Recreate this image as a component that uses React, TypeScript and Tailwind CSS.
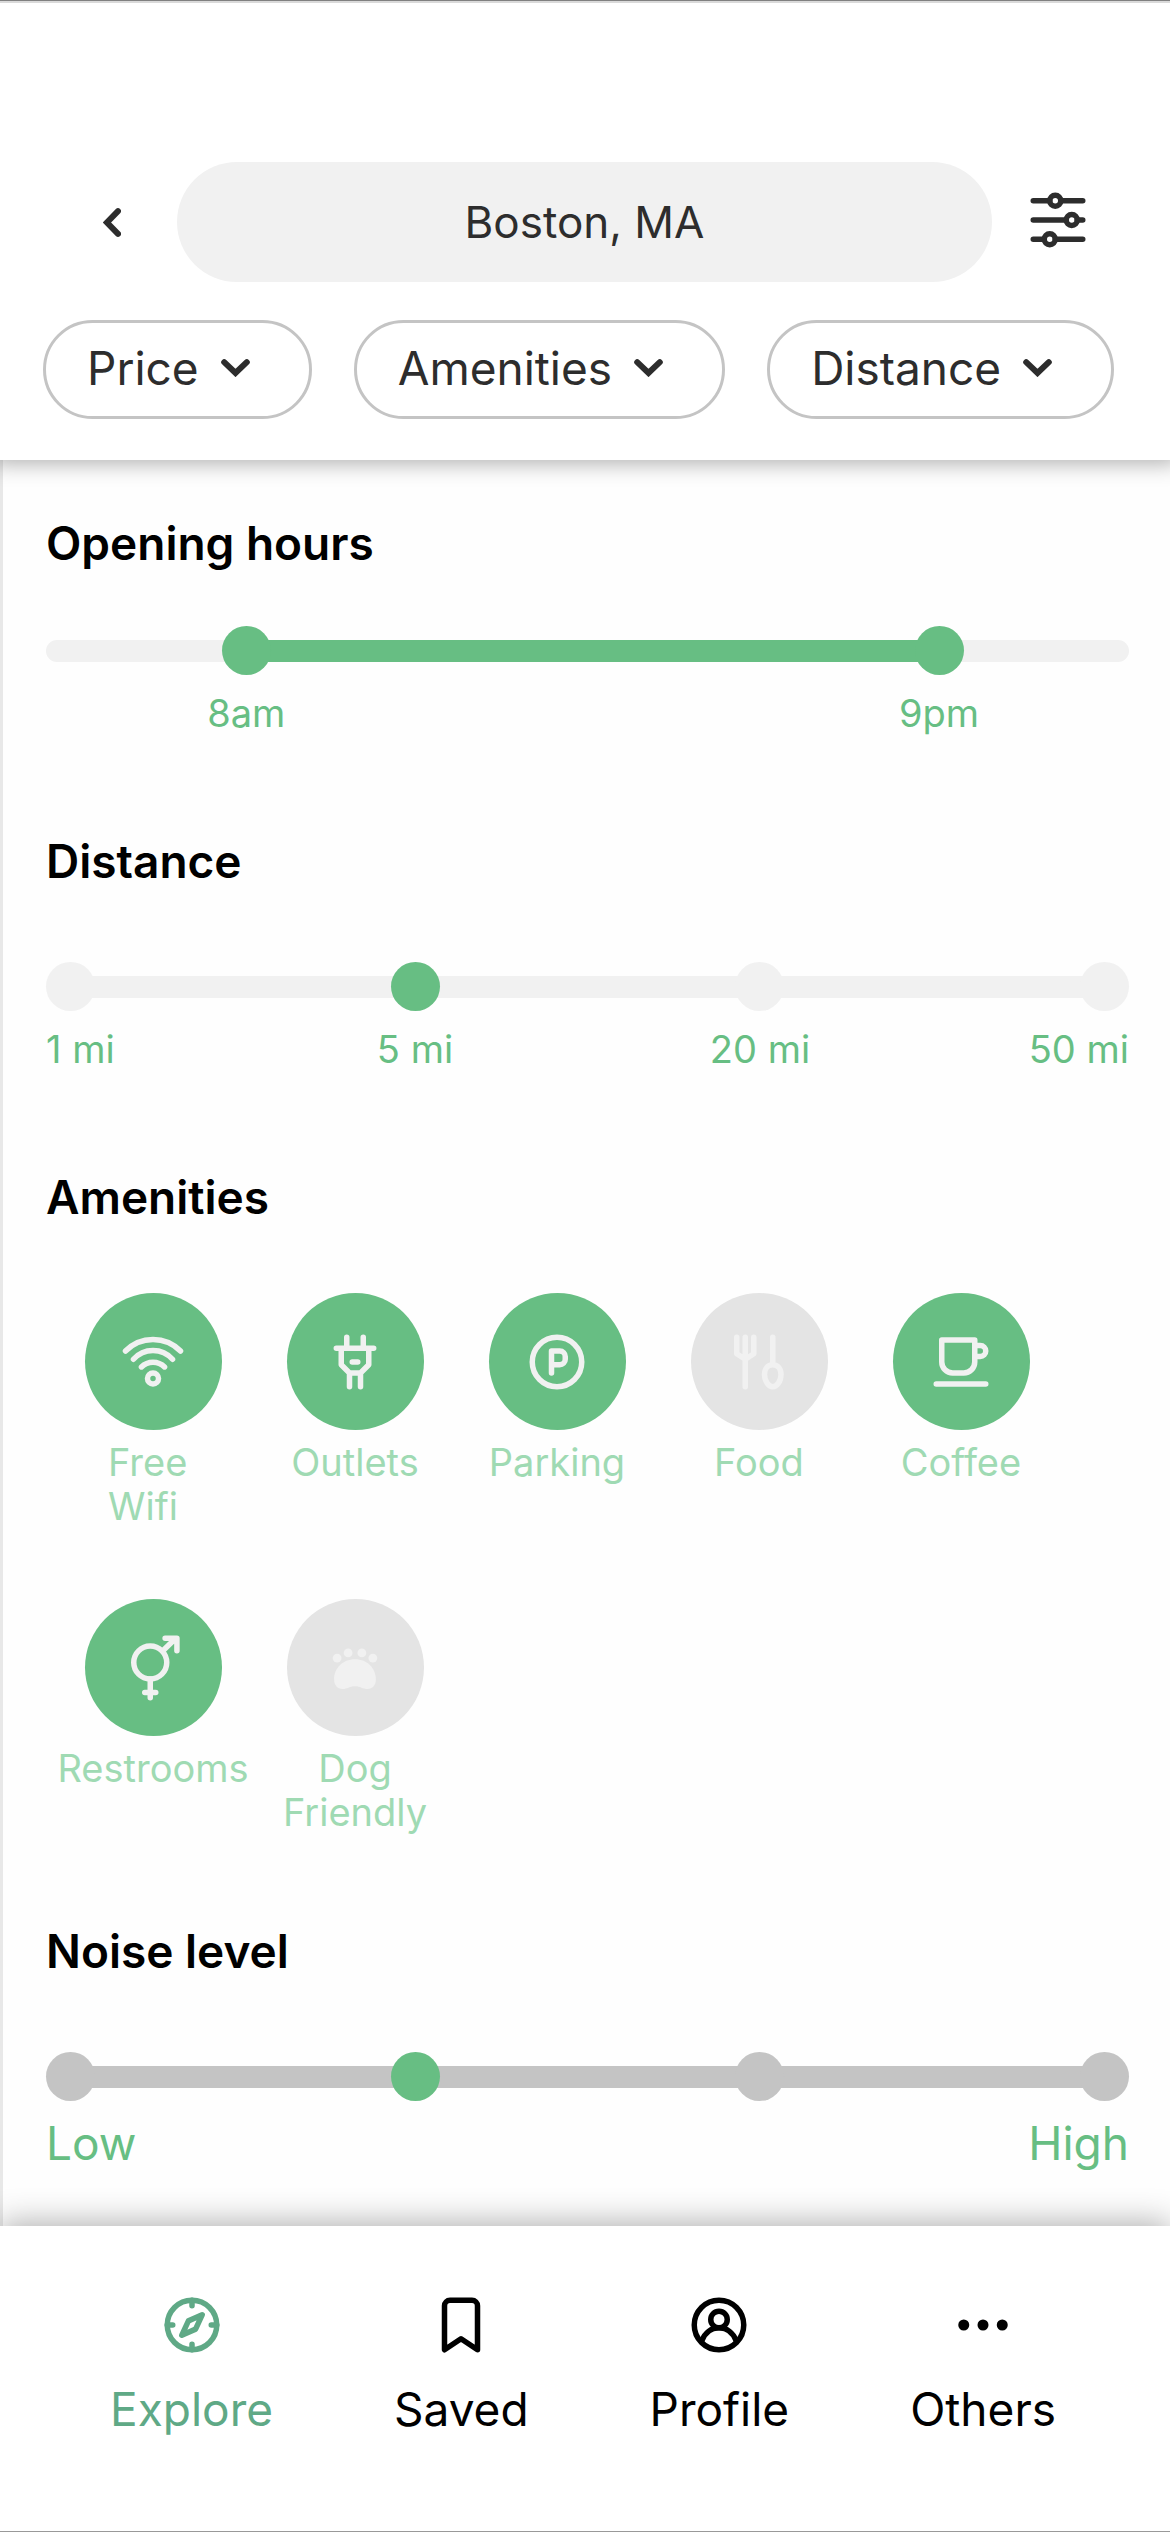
import React, { useState } from "react";

function Icon({ children }: { children: React.ReactNode }) {
  return (
    <svg
      viewBox="0 0 24 24"
      className="size-[66px] shrink-0"
      fill="none"
      stroke="currentColor"
      strokeWidth="2"
      strokeLinecap="round"
      strokeLinejoin="round"
      aria-hidden="true"
    >
      {children}
    </svg>
  );
}

function ChevronDown() {
  return (
    <svg viewBox="0 0 29 18" className="h-[18px] w-[29px] shrink-0" fill="none" stroke="currentColor" strokeWidth="6" strokeLinecap="round" aria-hidden="true">
      <path d="M3.2 3.2L14.5 14L25.8 3.2" />
    </svg>
  );
}

const filters = ["Price", "Amenities", "Distance"];

function Header() {
  return (
    <header className="relative z-10 border-t border-[#808080] bg-white pt-[161px] pb-[41px] text-[#2d2d2d] shadow-[0_-4px_20px_8px_rgba(0,0,0,0.3),inset_0_2px_0_#dadada]">
      <div className="flex items-center pr-[79px] pl-[83px]">
        <button type="button" aria-label="Back" className="flex h-[66px] w-[58px] shrink-0 items-center justify-center">
          <svg viewBox="0 0 18 29" className="h-[29px] w-[18px]" fill="none" stroke="currentColor" strokeWidth="6" strokeLinecap="round" aria-hidden="true">
            <path d="M15 3.2L4 14.5L15 25.8" />
          </svg>
        </button>
        <input
          aria-label="Location"
          defaultValue="Boston, MA"
          className="ml-9 h-[120px] min-w-0 flex-1 rounded-full bg-[#f1f1f1] text-center text-[44px] outline-none"
        />
        <button type="button" aria-label="Filters" className="-mt-1 ml-[33px] shrink-0">
          <Icon>
            <path d="M3 5h6M13 5h8M3 12h12M19 12h2M3 19h4M11 19h10" />
            <circle cx="11" cy="5" r="2" />
            <circle cx="17" cy="12" r="2" />
            <circle cx="9" cy="19" r="2" />
          </Icon>
        </button>
      </div>
      <div className="mt-[38px] flex gap-[42px] pl-[43px]">
        {filters.map((name) => (
          <button
            key={name}
            type="button"
            className="flex h-[99px] items-center gap-[22px] rounded-full border-3 border-[#c4c4c4] pr-[59px] pb-1 pl-[41px] text-[46px] leading-[56px]"
          >
            {name}
            <ChevronDown />
          </button>
        ))}
      </div>
    </header>
  );
}

function Heading({ children }: { children: React.ReactNode }) {
  return <h2 className="text-[46px] leading-[60px] font-semibold text-black">{children}</h2>;
}

function TimeRange() {
  const [from, setFrom] = useState(17);
  const [to, setTo] = useState(84);
  const thumb =
    "pointer-events-none absolute inset-x-0 top-0 h-[49px] w-full appearance-none bg-transparent [&::-webkit-slider-thumb]:pointer-events-auto [&::-webkit-slider-thumb]:size-[49px] [&::-webkit-slider-thumb]:appearance-none [&::-webkit-slider-thumb]:rounded-full [&::-webkit-slider-thumb]:bg-[#67be83]";
  const at = (v: number) => `calc(24.5px + (100% - 49px) * ${v / 100})`;
  return (
    <div className="mt-[53px]">
      <div className="relative flex h-[49px] items-center">
        <div className="h-[22px] w-full rounded-full bg-[#f1f1f1]" />
        <div className="absolute h-[22px] bg-[#67be83]" style={{ left: at(from), right: `calc(100% - ${at(to)})` }} />
        <input type="range" aria-label="Opens at" min="0" max="100" step="any" value={from} onChange={(e) => setFrom(+e.target.value)} className={thumb} />
        <input type="range" aria-label="Closes at" min="0" max="100" step="any" value={to} onChange={(e) => setTo(+e.target.value)} className={thumb} />
      </div>
      <div className="relative mt-[14px] h-12 text-[38px] leading-[48px] text-[#67be83]">
        <span className="absolute -translate-x-1/2" style={{ left: at(from) }}>8am</span>
        <span className="absolute -translate-x-1/2" style={{ left: at(to) }}>9pm</span>
      </div>
    </div>
  );
}

function StepSlider({ name, dark = false }: { name: string; dark?: boolean }) {
  const [value, setValue] = useState(1);
  const tone = dark ? "bg-[#c4c4c4]" : "bg-[#f1f1f1]";
  return (
    <div className="relative mt-[71px] flex h-[49px] items-center justify-between">
      <div className={`absolute inset-x-6 h-[22px] ${tone}`} />
      {[0, 1, 2, 3].map((step) => (
        <span key={step} className={`relative size-[49px] rounded-full ${step === value ? "bg-[#67be83]" : tone}`} />
      ))}
      <input
        type="range"
        aria-label={name}
        min="0"
        max="3"
        value={value}
        onChange={(e) => setValue(+e.target.value)}
        className="absolute inset-0 w-full cursor-pointer opacity-0"
      />
    </div>
  );
}

function WifiIcon() {
  return (
    <Icon>
      <path d="M2 8a14 14 0 0 1 20 0M4.900 11a9.500 9.500 0 0 1 14.200 0M7.800 13.800a6 6 0 0 1 8.400 0" />
      <circle cx="12" cy="18" r="2" />
    </Icon>
  );
}

function PlugIcon() {
  return (
    <Icon>
      <path d="M9 3v4M15 3v4M5.200 7h13.600M7 7v6l3 3h4l3-3V7M11 12h2M10 16v5M14 16v5" />
    </Icon>
  );
}

function ParkingIcon() {
  return (
    <Icon>
      <circle cx="12" cy="12" r="9" />
      <path d="M10 16V8h3a2 2 0 0 1 2 2v1a2 2 0 0 1-2 2h-3" />
    </Icon>
  );
}

function FoodIcon() {
  return (
    <Icon>
      <path d="M7 3v18M3.900 3v6L7 11l3.100-2V3M17 3v10M17 13c-1.800 0-3 1.500-3 3.500 0 2.500 1.500 4.500 3 4.500s3-2 3-4.500c0-2-1.200-3.500-3-3.500z" />
    </Icon>
  );
}

function CoffeeIcon() {
  return (
    <Icon>
      <path d="M5 4h12v8a4 4 0 0 1-4 4H9a4 4 0 0 1-4-4zM17 6h2a2 2 0 0 1 0 4h-2M3 20h18" />
    </Icon>
  );
}

function RestroomIcon() {
  return (
    <Icon>
      <circle cx="11" cy="10" r="6" />
      <path d="M11 16v6.800M9 20.900h4M15.500 5.800L20.300 1.200M16.400 1.200h4.300v4.500" />
    </Icon>
  );
}

function PawIcon() {
  return (
    <Icon>
      <g fill="currentColor" stroke="none">
        <circle cx="5.500" cy="8.400" r="1.600" />
        <circle cx="9.500" cy="6.500" r="1.600" />
        <circle cx="14.500" cy="6.500" r="1.600" />
        <circle cx="18.500" cy="8.400" r="1.600" />
        <path d="M12 8.800c4.500 0 7.600 3.300 7.600 7.300 0 2.300-1.300 3.500-3 3.500-1.800 0-2.600-1-4.600-1s-2.800 1-4.600 1c-1.700 0-3-1.200-3-3.500C4.400 12.100 7.500 8.800 12 8.800z" />
      </g>
    </Icon>
  );
}

const amenities = [
  { label: "Free Wifi", icon: <WifiIcon />, on: true, text: "w-[90px] text-left" },
  { label: "Outlets", icon: <PlugIcon />, on: true, text: "text-center" },
  { label: "Parking", icon: <ParkingIcon />, on: true, text: "text-center" },
  { label: "Food", icon: <FoodIcon />, on: false, text: "text-center" },
  { label: "Coffee", icon: <CoffeeIcon />, on: true, text: "text-center" },
  { label: "Restrooms", icon: <RestroomIcon />, on: true, text: "text-center" },
  { label: "Dog Friendly", icon: <PawIcon />, on: false, text: "w-[160px] text-center" },
];

function Amenity({ label, icon, on, text }: (typeof amenities)[number]) {
  const [active, setActive] = useState(on);
  return (
    <button type="button" aria-pressed={active} onClick={() => setActive(!active)} className="flex w-[202px] flex-col items-center">
      <span className={`flex size-[137px] items-center justify-center rounded-full text-[#f1f1f1] ${active ? "bg-[#67be83]" : "bg-[#e4e4e4]"}`}>
        {icon}
      </span>
      <span className={`mt-[10px] text-[38px] leading-[44px] text-[#9fdab3] ${text}`}>{label}</span>
    </button>
  );
}

const tabs = [
  {
    label: "Explore",
    icon: (
      <Icon>
        <circle cx="12" cy="12" r="9" />
        <path d="M12 3v2M12 19v2M3 12h2M19 12h2M15.700 8.300l-5 2.200-2.400 5.200 5-2.200z" />
      </Icon>
    ),
  },
  {
    label: "Saved",
    icon: (
      <Icon>
        <path d="M6 5a2 2 0 0 1 2-2h8a2 2 0 0 1 2 2v16l-6-4-6 4z" />
      </Icon>
    ),
  },
  {
    label: "Profile",
    icon: (
      <Icon>
        <circle cx="12" cy="12" r="9" />
        <circle cx="12" cy="10" r="3" />
        <path d="M5.700 17.800c1.100-2.900 3.500-4.800 6.300-4.800s5.200 1.900 6.300 4.800" />
      </Icon>
    ),
  },
  {
    label: "Others",
    icon: (
      <Icon>
        <g fill="currentColor" stroke="none">
          <circle cx="5" cy="12" r="2" />
          <circle cx="12" cy="12" r="2" />
          <circle cx="19" cy="12" r="2" />
        </g>
      </Icon>
    ),
  },
];

export default function App() {
  return (
    <div className="flex min-h-screen flex-col bg-white font-['Inter',sans-serif]">
      <Header />
      <main className="flex-1 border-l-3 border-[#e8e8e8] bg-[#fefefe] pr-[41px] pb-[54px] pl-[43px]">
        <section className="pt-[53px]">
          <Heading>Opening hours</Heading>
          <TimeRange />
        </section>
        <section className="pt-[94px]">
          <Heading>Distance</Heading>
          <StepSlider name="Distance" />
          <div className="mt-[14px] flex justify-between text-[38px] leading-[48px] text-[#67be83]">
            <span className="w-[124px]">1 mi</span>
            <span className="w-[200px] text-center">5 mi</span>
            <span className="w-[200px] text-center">20 mi</span>
            <span className="w-[124px] text-right">50 mi</span>
          </div>
        </section>
        <section className="pt-[94px]">
          <Heading>Amenities</Heading>
          <div className="mt-[66px] flex flex-wrap items-start gap-y-[71px] pl-[6px]">
            {amenities.map((item) => (
              <Amenity key={item.label} {...item} />
            ))}
          </div>
        </section>
        <section className="pt-[87px]">
          <Heading>Noise level</Heading>
          <StepSlider name="Noise level" dark />
          <div className="mt-[14px] flex justify-between text-[46px] leading-[56px] text-[#67be83]">
            <span>Low</span>
            <span>High</span>
          </div>
        </section>
      </main>
      <nav className="relative z-10 flex justify-between border-b border-[#999999] bg-white pt-[66px] pr-[114px] pb-[94px] pl-[110px] shadow-[0_-4px_30px_rgba(0,0,0,0.3)]">
        {tabs.map((tab, i) => (
          <a
            key={tab.label}
            href={`#${tab.label.toLowerCase()}`}
            className={`flex flex-col items-center text-[46px] leading-[56px] ${i === 0 ? "text-[#5fa986]" : "text-black"}`}
          >
            {tab.icon}
            <span className="mt-[23px]">{tab.label}</span>
          </a>
        ))}
      </nav>
    </div>
  );
}
